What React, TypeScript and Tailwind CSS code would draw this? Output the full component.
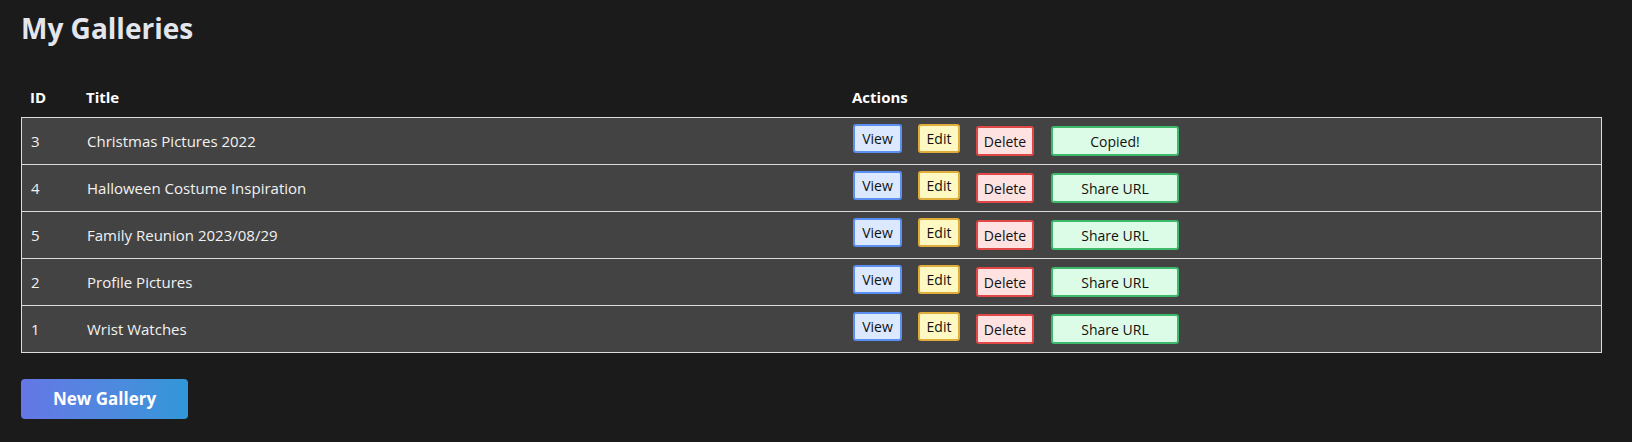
const galleries = [
  { id: 3, title: 'Christmas Pictures 2022', copied: true },
  { id: 4, title: 'Halloween Costume Inspiration', copied: false },
  { id: 5, title: 'Family Reunion 2023/08/29', copied: false },
  { id: 2, title: 'Profile Pictures', copied: false },
  { id: 1, title: 'Wrist Watches', copied: false },
];

function GalleryRow({ id, title, copied }: { id: number; title: string; copied: boolean }) {
  return (
    <div className="grid grid-cols-[65px_766px_1fr] h-[47px] border-t border-[#dcdcdc] bg-[#434343] text-[#f2f2f2] text-[15px]">
      <div className="pl-[9px] flex items-center">{id}</div>
      <div className="flex items-center">{title}</div>
      <div className="flex items-start gap-4 text-[14px] font-medium text-[#111]">
        <button className="mt-[6px] h-[29px] w-[49px] rounded-[3px] border-2 border-[#5b8ff2] bg-[#dbe8fe]">View</button>
        <button className="mt-[6px] h-[29px] w-[42px] rounded-[3px] border-2 border-[#e0ad3a] bg-[#fef8c3]">Edit</button>
        <button className="mt-[8px] h-[30px] w-[58px] rounded-[3px] border-2 border-[#e04848] bg-[#fee2e2]">Delete</button>
        <button className="ml-px mt-[8px] h-[30px] w-[128px] rounded-[3px] border-2 border-[#3cb96b] bg-[#dcfce7]">
          {copied ? 'Copied!' : 'Share URL'}
        </button>
      </div>
    </div>
  );
}

export default function App() {
  return (
    <div className="min-h-[442px] bg-[#1b1b1b] pl-[21px] pr-[30px] pt-[8px] font-['Open_Sans',sans-serif]">
      <h1 className="text-[28px] leading-[40px] font-bold text-[#e4e6ee]">My Galleries</h1>

      {/* Table */}
      <div className="mt-[30px]">
        <div className="grid grid-cols-[65px_766px_1fr] h-[39px] items-center text-[15px] font-bold text-white">
          <div className="pl-[9px]">ID</div>
          <div>Title</div>
          <div>Actions</div>
        </div>
        <div className="border-x border-b border-[#dcdcdc]">
          {galleries.map((g) => (
            <GalleryRow key={g.id} {...g} />
          ))}
        </div>
      </div>

      <button className="mt-[26px] h-[40px] w-[167px] rounded-[4px] bg-gradient-to-r from-[#6477e6] to-[#2f97d8] text-[17px] font-bold text-white">
        New Gallery
      </button>
    </div>
  );
}
